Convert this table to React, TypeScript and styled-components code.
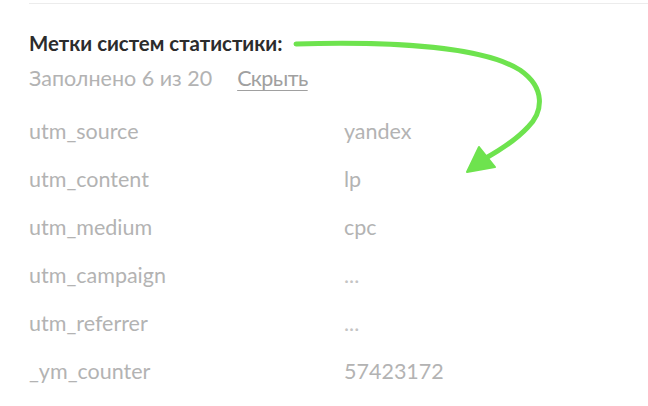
import React from "react";
import styled, { createGlobalStyle } from "styled-components";

const GlobalStyle = createGlobalStyle`
  html, body { margin: 0; padding: 0; background: #ffffff; }
  body { font-family: Lato, "Open Sans", sans-serif; }
`;

const Page = styled.div`
  position: relative;
  width: 648px;
  height: 406px;
  overflow: hidden;
  padding-left: 29px;
  box-sizing: border-box;
`;

const TopRule = styled.div`
  margin-top: 3px;
  height: 1px;
  background: #ececec;
`;

const Title = styled.h2`
  margin: 25px 0 0;
  font-family: Lato, sans-serif;
  font-size: 20.4px;
  line-height: 28px;
  font-weight: 700;
  color: #2c2c2c;
`;

const Summary = styled.div`
  margin-top: 7px;
  display: flex;
  align-items: baseline;
  gap: 25px;
  font-family: Lato, sans-serif;
  font-size: 21.5px;
  line-height: 28px;
  color: #b3b3b3;
`;

const HideLink = styled.a`
  color: #a0a0a0;
  letter-spacing: -0.6px;
  text-decoration: underline;
  text-underline-offset: 4px;
  text-decoration-thickness: 1px;
  cursor: pointer;
`;

const Table = styled.div`
  margin-top: 15px;
  display: grid;
  grid-template-columns: 315px 1fr;
  grid-auto-rows: 48px;
  align-items: center;
`;

const Cell = styled.div<{ $muted?: boolean }>`
  font-family: Lato, sans-serif;
  font-size: 21.5px;
  line-height: 48px;
  color: ${(p) => (p.$muted ? "#c4c4c4" : "#b3b3b3")};
  white-space: nowrap;
`;

const ArrowLayer = styled.svg`
  position: absolute;
  left: 0;
  top: 0;
  pointer-events: none;
`;

const rows: [string, string][] = [
  ["utm_source", "yandex"],
  ["utm_content", "lp"],
  ["utm_medium", "cpc"],
  ["utm_campaign", "..."],
  ["utm_referrer", "..."],
  ["_ym_counter", "57423172"],
];

export default function App() {
  return (
    <>
      <GlobalStyle />
      <Page>
        <TopRule />
        <Title>Метки систем статистики:</Title>
        <Summary>
          <span>Заполнено 6 из 20</span>
          <HideLink>Скрыть</HideLink>
        </Summary>
        <Table>
          {rows.map(([k, v]) => (
            <React.Fragment key={k}>
              <Cell>{k}</Cell>
              <Cell $muted={v === "..."}>{v}</Cell>
            </React.Fragment>
          ))}
        </Table>
        <ArrowLayer width="648" height="406" viewBox="0 0 648 406">
          <path
            d="M296 44 C 400 41, 485 48, 520 70 C 546 88, 543 112, 528 127 C 516 140, 502 149, 486 158"
            fill="none"
            stroke="#6ee34e"
            strokeWidth="5"
            strokeLinecap="round"
          />
          <polygon points="467,172 479,147 495,167" fill="#6ee34e" stroke="#6ee34e" strokeWidth="2" strokeLinejoin="round" />
        </ArrowLayer>
      </Page>
    </>
  );
}
